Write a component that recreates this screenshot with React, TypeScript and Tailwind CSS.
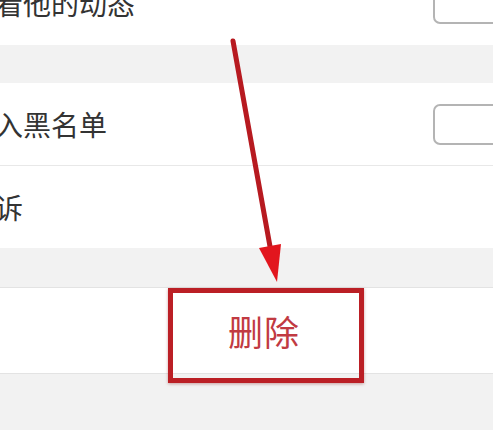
import React from 'react'

const font = { fontFamily: '"Noto Sans CJK SC", "Noto Sans", sans-serif' }

const Toggle = () => (
  <div className="shrink-0 w-[80px] h-[41px] -mr-[20px] rounded-[7px] border-2 border-[#b4b4b4] bg-white" />
)

const Row: React.FC<{ label: string; toggle?: boolean; className?: string }> = ({
  label,
  toggle,
  className = ''
}) => (
  <div className={`flex items-center bg-white pr-0 ${className}`}>
    <span className="-ml-[33px] text-[28px] leading-none text-[#333333] whitespace-nowrap">{label}</span>
    {toggle && <div className="ml-auto"><Toggle /></div>}
  </div>
)

export default function App() {
  return (
    <div className="relative w-[493px] h-[430px] overflow-hidden bg-[#f2f2f2]" style={font}>
      <div className="flex flex-col">
        <Row label="不看他的动态" toggle className="h-[84px] -mt-[39px]" />
        <div className="h-[38px]" />
        <Row label="加入黑名单" toggle className="h-[83px] border-b border-[#e8e8e8]" />
        <Row label="投诉" className="h-[82px]" />
        <div className="h-[40px] border-b border-[#e3e3e3]" />
        <div className="flex items-center h-[86px] bg-white border-b border-[#e3e3e3]">
          <span className="ml-[228px] text-[35px] leading-none text-[#c13a42] tracking-[1px]">删除</span>
        </div>
      </div>

      {/* annotation: box around the button */}
      <div className="absolute left-[168px] top-[288px] w-[196px] h-[95px] border-[5px] border-[#bb1f25] shadow-[0_1px_3px_rgba(120,0,0,0.35)]" />

      {/* annotation: arrow */}
      <svg className="absolute left-0 top-0" width="493" height="430" viewBox="0 0 493 430">
        <line x1="233" y1="41" x2="271" y2="252" stroke="#b71a20" strokeWidth="5" strokeLinecap="round" />
        <polygon points="259,248 281,244 277,282" fill="#e2161e" />
      </svg>
    </div>
  )
}
